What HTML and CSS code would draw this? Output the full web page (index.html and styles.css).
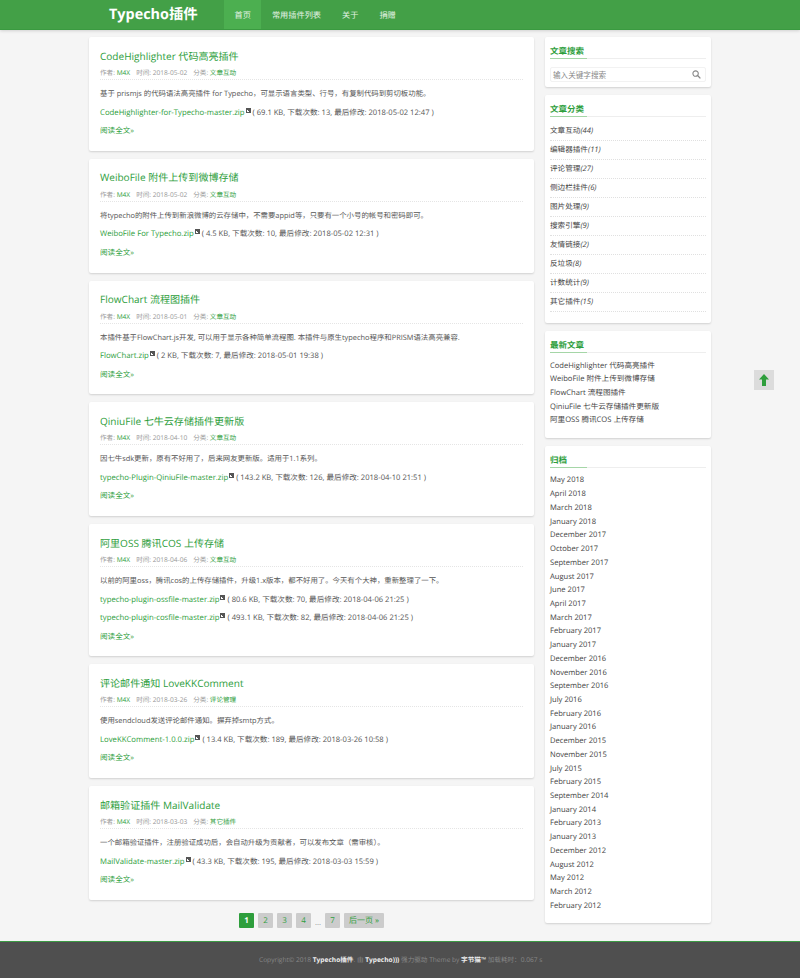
FILE: index.html
```html
<!DOCTYPE html>
<html lang="zh-CN">
<head>
    <meta charset="UTF-8">
    <title>Typecho插件</title>
    <link rel="stylesheet" href="styles.css">
</head>
<body>
    <header class="site-header">
        <a class="logo" href="#">Typecho插件</a>
        <nav class="nav">
            <a class="active" href="#">首页</a>
            <a href="#">常用插件列表</a>
            <a href="#">关于</a>
            <a href="#">捐赠</a>
        </nav>
    </header>

    <div class="wrap">
        <main class="main">
            <article class="card post">
                <h2><a href="#">CodeHighlighter 代码高亮插件</a></h2>
                <div class="meta">作者: <a href="#">M4X</a><span>时间: 2018-05-02</span><span>分类: <a href="#">文章互动</a></span></div>
                <p>基于 prismjs 的代码语法高亮插件 for Typecho，可显示语言类型、行号，有复制代码到剪切板功能。</p>
                <p><a class="file" href="#">CodeHighlighter-for-Typecho-master.zip</a> ( 69.1 KB, 下载次数: 13, 最后修改: 2018-05-02 12:47 )</p>
                <p><a href="#">阅读全文»</a></p>
            </article>
            <article class="card post">
                <h2><a href="#">WeiboFile 附件上传到微博存储</a></h2>
                <div class="meta">作者: <a href="#">M4X</a><span>时间: 2018-05-02</span><span>分类: <a href="#">文章互动</a></span></div>
                <p>将typecho的附件上传到新浪微博的云存储中，不需要appid等，只要有一个小号的帐号和密码即可。</p>
                <p><a class="file" href="#">WeiboFile For Typecho.zip</a> ( 4.5 KB, 下载次数: 10, 最后修改: 2018-05-02 12:31 )</p>
                <p><a href="#">阅读全文»</a></p>
            </article>
            <article class="card post">
                <h2><a href="#">FlowChart 流程图插件</a></h2>
                <div class="meta">作者: <a href="#">M4X</a><span>时间: 2018-05-01</span><span>分类: <a href="#">文章互动</a></span></div>
                <p>本插件基于FlowChart.js开发, 可以用于显示各种简单流程图. 本插件与原生typecho程序和PRISM语法高亮兼容.</p>
                <p><a class="file" href="#">FlowChart.zip</a> ( 2 KB, 下载次数: 7, 最后修改: 2018-05-01 19:38 )</p>
                <p><a href="#">阅读全文»</a></p>
            </article>
            <article class="card post">
                <h2><a href="#">QiniuFile 七牛云存储插件更新版</a></h2>
                <div class="meta">作者: <a href="#">M4X</a><span>时间: 2018-04-10</span><span>分类: <a href="#">文章互动</a></span></div>
                <p>因七牛sdk更新，原有不好用了，后来网友更新版。适用于1.1系列。</p>
                <p><a class="file" href="#">typecho-Plugin-QiniuFile-master.zip</a> ( 143.2 KB, 下载次数: 126, 最后修改: 2018-04-10 21:51 )</p>
                <p><a href="#">阅读全文»</a></p>
            </article>
            <article class="card post">
                <h2><a href="#">阿里OSS 腾讯COS 上传存储</a></h2>
                <div class="meta">作者: <a href="#">M4X</a><span>时间: 2018-04-06</span><span>分类: <a href="#">文章互动</a></span></div>
                <p>以前的阿里oss，腾讯cos的上传存储插件，升级1.x版本，都不好用了。今天有个大神，重新整理了一下。</p>
                <p><a class="file" href="#">typecho-plugin-ossfile-master.zip</a> ( 80.6 KB, 下载次数: 70, 最后修改: 2018-04-06 21:25 )</p>
                <p><a class="file" href="#">typecho-plugin-cosfile-master.zip</a> ( 493.1 KB, 下载次数: 82, 最后修改: 2018-04-06 21:25 )</p>
                <p><a href="#">阅读全文»</a></p>
            </article>
            <article class="card post">
                <h2><a href="#">评论邮件通知 LoveKKComment</a></h2>
                <div class="meta">作者: <a href="#">M4X</a><span>时间: 2018-03-26</span><span>分类: <a href="#">评论管理</a></span></div>
                <p>使用sendcloud发送评论邮件通知。摒弃掉smtp方式。</p>
                <p><a class="file" href="#">LoveKKComment-1.0.0.zip</a> ( 13.4 KB, 下载次数: 189, 最后修改: 2018-03-26 10:58 )</p>
                <p><a href="#">阅读全文»</a></p>
            </article>
            <article class="card post">
                <h2><a href="#">邮箱验证插件 MailValidate</a></h2>
                <div class="meta">作者: <a href="#">M4X</a><span>时间: 2018-03-03</span><span>分类: <a href="#">其它插件</a></span></div>
                <p>一个邮箱验证插件，注册验证成功后，会自动升级为贡献者，可以发布文章（需审核）。</p>
                <p><a class="file" href="#">MailValidate-master.zip</a> ( 43.3 KB, 下载次数: 195, 最后修改: 2018-03-03 15:59 )</p>
                <p><a href="#">阅读全文»</a></p>
            </article>

            <div class="pager">
                <a class="current" href="#">1</a>
                <a href="#">2</a>
                <a href="#">3</a>
                <a href="#">4</a>
                <span>...</span>
                <a href="#">7</a>
                <a href="#">后一页 »</a>
            </div>
        </main>

        <aside class="side">
            <section class="card widget">
                <h3><span>文章搜索</span></h3>
                <form class="search">
                    <input type="text" placeholder="输入关键字搜索">
                    <svg width="9" height="9" viewBox="0 0 10 10"><circle cx="4" cy="4" r="3" fill="none" stroke="#888" stroke-width="1.2"/><path d="M6.2 6.2L9.3 9.3" stroke="#888" stroke-width="1.5"/></svg>
                </form>
            </section>
            <section class="card widget">
                <h3><span>文章分类</span></h3>
                <ul class="cats">
                    <li>文章互动<em>(44)</em></li>
                    <li>编辑器插件<em>(11)</em></li>
                    <li>评论管理<em>(27)</em></li>
                    <li>侧边栏挂件<em>(6)</em></li>
                    <li>图片处理<em>(9)</em></li>
                    <li>搜索引擎<em>(9)</em></li>
                    <li>友情链接<em>(2)</em></li>
                    <li>反垃圾<em>(8)</em></li>
                    <li>计数统计<em>(9)</em></li>
                    <li>其它插件<em>(15)</em></li>
                </ul>
            </section>
            <section class="card widget">
                <h3><span>最新文章</span></h3>
                <ul class="links">
                    <li>CodeHighlighter 代码高亮插件</li>
                    <li>WeiboFile 附件上传到微博存储</li>
                    <li>FlowChart 流程图插件</li>
                    <li>QiniuFile 七牛云存储插件更新版</li>
                    <li>阿里OSS 腾讯COS 上传存储</li>
                </ul>
            </section>
            <section class="card widget">
                <h3><span>归档</span></h3>
                <ul class="links">
                    <li>May 2018</li>
                    <li>April 2018</li>
                    <li>March 2018</li>
                    <li>January 2018</li>
                    <li>December 2017</li>
                    <li>October 2017</li>
                    <li>September 2017</li>
                    <li>August 2017</li>
                    <li>June 2017</li>
                    <li>April 2017</li>
                    <li>March 2017</li>
                    <li>February 2017</li>
                    <li>January 2017</li>
                    <li>December 2016</li>
                    <li>November 2016</li>
                    <li>September 2016</li>
                    <li>July 2016</li>
                    <li>February 2016</li>
                    <li>January 2016</li>
                    <li>December 2015</li>
                    <li>November 2015</li>
                    <li>July 2015</li>
                    <li>February 2015</li>
                    <li>September 2014</li>
                    <li>January 2014</li>
                    <li>February 2013</li>
                    <li>January 2013</li>
                    <li>December 2012</li>
                    <li>August 2012</li>
                    <li>May 2012</li>
                    <li>March 2012</li>
                    <li>February 2012</li>
                </ul>
            </section>
        </aside>
    </div>

    <a class="to-top" href="#">
        <svg width="10" height="12" viewBox="0 0 10 12"><path d="M5 0L10 5.5H7V12H3V5.5H0Z" fill="#2e9e3c"/></svg>
    </a>

    <footer class="site-footer">
        Copyright© 2018 <b>Typecho插件</b>. 由 <b>Typecho)))</b> 强力驱动 Theme by <b>字节猫™</b> 加载耗时：0.067 s
    </footer>
</body>
</html>
```

FILE: styles.css
```css
* {
    box-sizing: border-box;
}
body {
    margin: 0;
    background: #f5f5f5;
    font-family: "Open Sans", "Noto Sans CJK SC", sans-serif;
    font-size: 7.6px;
    color: #555;
    text-rendering: geometricPrecision;
}
a {
    color: #2e9e3c;
    text-decoration: none;
}

/* header */
.site-header {
    display: flex;
    height: 30px;
    padding-left: 109px;
    background: #43a047;
    border-bottom: 1px solid #3a9a40;
    box-shadow: 0 1px 3px rgba(0, 0, 0, 0.15);
}
.logo {
    width: 115px;
    color: #fff;
    font-size: 14.4px;
    font-weight: bold;
    line-height: 29px;
}
.nav {
    display: flex;
}
.nav a {
    padding: 0 10.5px;
    color: #e4f3e5;
    font-size: 8.2px;
    line-height: 31px;
}
.nav a.active {
    background: #4caf50;
}

/* layout */
.wrap {
    display: flex;
    align-items: flex-start;
    gap: 11px;
    padding: 7px 0 0 89px;
}
.main {
    width: 445px;
}
.side {
    width: 166px;
}
.card {
    margin-bottom: 8px;
    background: #fff;
    border-radius: 2px;
    box-shadow: 0 1px 2px rgba(0, 0, 0, 0.15);
}

/* posts */
.post {
    padding: 10.5px 11px 13.8px;
}
.post h2 {
    margin: 0;
    font-size: 10.05px;
    font-weight: normal;
    line-height: 16px;
}
.meta {
    margin-top: 3.5px;
    padding-bottom: 1px;
    border-bottom: 1px dotted #e5e5e5;
    color: #999;
    font-size: 6.6px;
    line-height: 11px;
}
.meta span {
    margin-left: 6px;
}
.post p {
    margin: 0;
    padding-top: 6.5px;
    line-height: 12px;
}
.meta + p {
    padding-top: 8px;
    font-size: 7.4px;
}
.file {
    font-size: 7.75px;
}
.file::after {
    content: "";
    display: inline-block;
    width: 4px;
    height: 4px;
    margin: 0 0 0 1px;
    vertical-align: 2px;
    border-left: 1px solid #555;
    border-bottom: 1px solid #555;
    background: linear-gradient(45deg, transparent 35%, #555 35%);
}

/* pagination */
.pager {
    display: flex;
    justify-content: center;
    gap: 4px;
    padding: 5px 0 12.5px;
}
.pager a {
    min-width: 15px;
    padding: 0 5px;
    background: #ccc;
    border-radius: 1px;
    font-size: 8px;
    line-height: 15px;
    text-align: center;
}
.pager a.current {
    background: #2e9e3c;
    color: #fff;
    font-weight: bold;
}
.pager span {
    align-self: flex-end;
    color: #777;
}

/* sidebar */
.widget {
    padding: 8px 5px 5px;
}
.widget h3 {
    margin: 0 0 5px;
    border-bottom: 1px solid #eee;
    font-size: 8.5px;
    line-height: 13px;
}
.widget h3 span {
    display: inline-block;
    min-width: 37px;
    margin-bottom: -1px;
    border-bottom: 1px solid #a5d6a7;
    color: #2e9e3c;
}
.search {
    display: flex;
    align-items: center;
    height: 15px;
    margin-top: 8px;
    padding-right: 4px;
    border: 1px solid #f2f2f2;
    border-radius: 2px;
}
.search input {
    flex: 1;
    min-width: 0;
    padding: 0 2px;
    border: 0;
    background: transparent;
    font: inherit;
}
.search input::placeholder {
    color: #888;
}
.widget ul {
    margin: 0;
    padding: 0;
    list-style: none;
    color: #444;
}
.cats {
    padding-bottom: 6px !important;
}
.cats li {
    height: 19px;
    border-bottom: 1px dotted #e0e0e0;
    line-height: 19px;
}
.links {
    padding: 1.5px 0 4.9px !important;
}
.links li {
    line-height: 13.72px;
}

/* back to top */
.to-top {
    position: absolute;
    top: 370px;
    left: 754px;
    display: flex;
    align-items: center;
    justify-content: center;
    width: 20px;
    height: 20px;
    background: #dcdcdc;
}

/* footer */
.site-footer {
    height: 37px;
    padding-left: 259px;
    background: #4f4f4f;
    border-top: 1.5px solid #3c9a44;
    color: #888;
    font-size: 6.6px;
    line-height: 36px;
}
.site-footer b {
    color: #eee;
}
```
